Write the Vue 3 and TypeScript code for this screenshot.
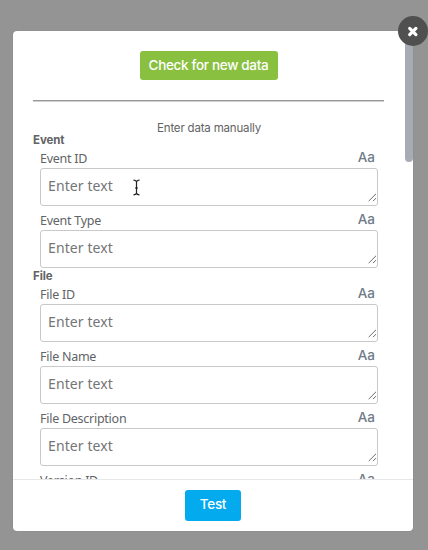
<script setup lang="ts">
interface Section {
  title: string
  fields: string[]
}

const sections: Section[] = [
  { title: 'Event', fields: ['Event ID', 'Event Type'] },
  { title: 'File', fields: ['File ID', 'File Name', 'File Description', 'Version ID'] },
]
</script>

<template>
  <div class="overlay">
    <div class="modal">
      <div class="body">
        <div class="top">
          <button class="check" type="button">Check for new data</button>
        </div>
        <div class="rule"></div>
        <p class="hint">Enter data manually</p>
        <section v-for="section in sections" :key="section.title">
          <h3 class="title">{{ section.title }}</h3>
          <div v-for="field in section.fields" :key="field" class="field">
            <div class="label-row">
              <label class="label">{{ field }}</label>
              <span class="type">Aa</span>
            </div>
            <div class="box">
              <textarea class="input" rows="1" placeholder="Enter text"></textarea>
              <svg class="grip" width="9" height="9" viewBox="0 0 9 9">
                <path d="M0.7 8.1 8 0.8M5 8.1 8 5.1" />
              </svg>
            </div>
          </div>
        </section>
      </div>
      <div class="scroll-thumb"></div>
      <footer class="footer">
        <button class="test" type="button">Test</button>
      </footer>
      <button class="close" type="button" aria-label="Close">
        <svg width="30" height="30" viewBox="0 0 30 30">
          <path d="M11.7 12.4 17.9 18.6M17.9 12.4 11.7 18.6" />
        </svg>
      </button>
    </div>
    <svg class="cursor" width="9" height="17" viewBox="0 0 9 17">
      <path d="M1.5 1.2C3.3 1.2 4.5 1.8 4.5 3.2 4.5 1.8 5.7 1.2 7.5 1.2M4.5 3V14M1.5 15.8C3.3 15.8 4.5 15.2 4.5 13.8 4.5 15.2 5.7 15.8 7.5 15.8M3 9H6" />
    </svg>
  </div>
</template>

<style>
body {
  overflow: hidden;
  background: #949494;
}
</style>

<style scoped>
.overlay {
  position: relative;
  box-sizing: border-box;
  width: 428px;
  height: 550px;
  padding: 31px 15px 19px 13px;
  background: #949494;
  font-family: 'Noto Sans', sans-serif;
  color: #626365;
}
.modal {
  position: relative;
  display: flex;
  flex-direction: column;
  height: 500px;
  border-radius: 4px;
  background: #fff;
  box-shadow: 0 0 1px rgba(0, 0, 0, 0.25);
}
.body {
  box-sizing: border-box;
  height: 448px;
  padding: 20px 29px 0 20px;
  overflow: hidden;
}
.top {
  display: flex;
  justify-content: center;
}
button {
  padding: 0;
  border: 0;
  color: #fff;
}
.check {
  width: 138px;
  height: 29px;
  border-radius: 3px;
  background: #89c03f;
  font: 500 13.5px/28px Inter, sans-serif;
  letter-spacing: -0.32px;
  padding-bottom: 1px;
}
.rule {
  height: 1px;
  margin-top: 20px;
  background: #98989a;
  border-bottom: 1px solid #d0d0d1;
}
.hint {
  height: 18px;
  margin: 12px 0 0;
  padding: 5px 0 0 1px;
  box-sizing: border-box;
  text-align: center;
  font: 400 11.5px/18px Inter, sans-serif;
  letter-spacing: -0.18px;
}
.title {
  height: 12px;
  margin: 0;
  font: 700 11.5px/16px Inter, sans-serif;
  letter-spacing: -0.1px;
}
.field {
  padding: 0 6px 0 7px;
}
.label-row {
  display: flex;
  justify-content: space-between;
  height: 24px;
}
.label {
  font-size: 12.5px;
  line-height: 29px;
  letter-spacing: -0.26px;
  white-space: nowrap;
}
.type {
  margin-right: 3px;
  color: #6f7b87;
  font: 500 13.5px/26px Inter, sans-serif;
}
.box {
  position: relative;
  box-sizing: border-box;
  height: 38px;
  border: 1px solid #c9c9cb;
  border-radius: 3px;
  background: #fff;
}
.input {
  display: block;
  box-sizing: border-box;
  width: 100%;
  height: 36px;
  padding: 6px 7px;
  border: 0;
  outline: 0;
  resize: none;
  overflow: hidden;
  background: transparent;
  color: #626365;
  font: 400 14px/22px 'Noto Sans', sans-serif;
  letter-spacing: 0.1px;
}
.input::placeholder {
  color: #747577;
}
.grip {
  position: absolute;
  right: 0;
  bottom: 3px;
  fill: none;
  stroke: #6c6c6c;
  stroke-width: 1;
}
.scroll-thumb {
  position: absolute;
  top: 0;
  right: 0;
  width: 8px;
  height: 131px;
  border-radius: 4px;
  background: #a7abb4;
}
.footer {
  display: flex;
  justify-content: center;
  box-sizing: border-box;
  height: 52px;
  padding-top: 10px;
  border-top: 1px solid #e7e7e9;
}
.test {
  width: 56px;
  height: 31px;
  border-radius: 3px;
  background: #04aaee;
  font: 500 13.5px/28px Inter, sans-serif;
  letter-spacing: -0.3px;
  padding-bottom: 3px;
}
.close {
  position: absolute;
  top: -15px;
  right: -15px;
  width: 30px;
  height: 30px;
  border-radius: 50%;
  background: #505050;
}
.close svg {
  display: block;
  fill: none;
  stroke: #fff;
  stroke-width: 3.2;
  stroke-linecap: round;
}
.cursor {
  position: absolute;
  left: 132px;
  top: 179px;
  fill: none;
  stroke: #222;
  stroke-width: 1.2;
}
</style>
